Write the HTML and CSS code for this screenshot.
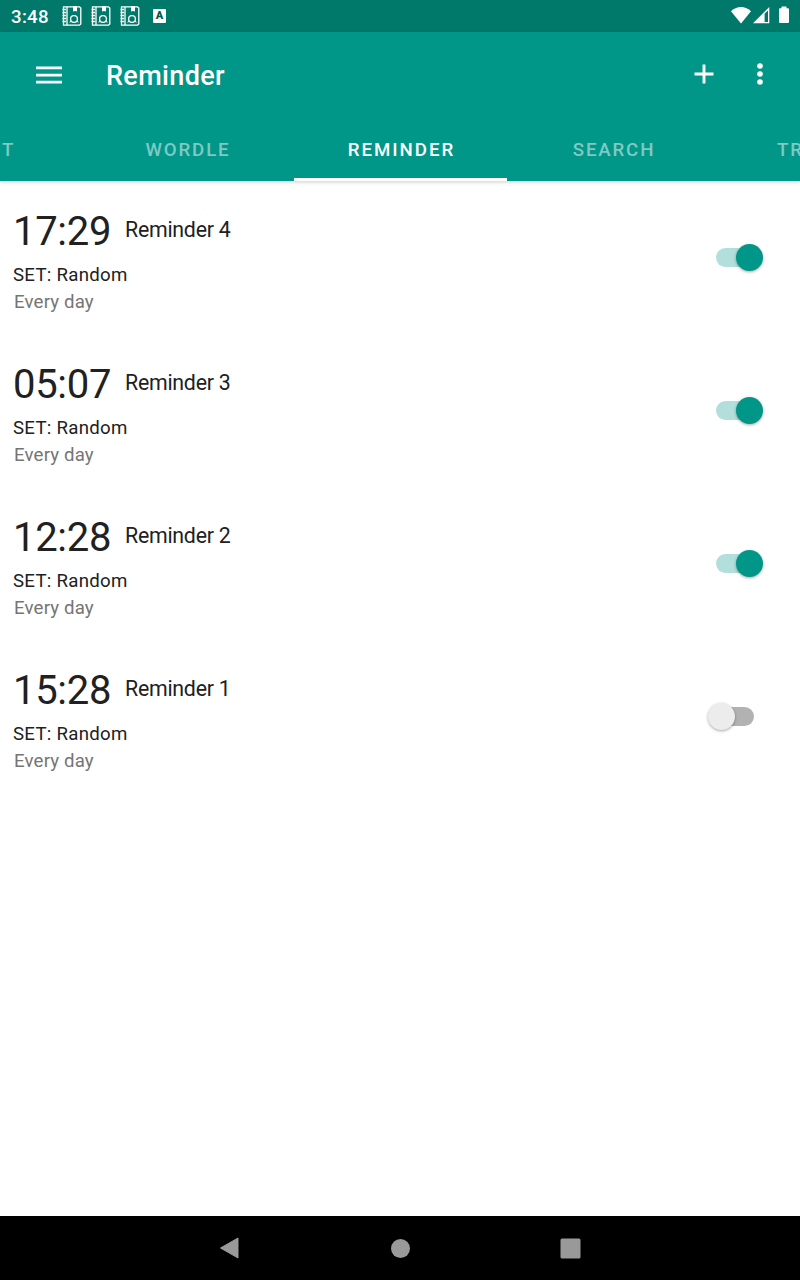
FILE: index.html
```html
<!DOCTYPE html>
<html lang="en">
<head>
  <meta charset="UTF-8" />
  <meta name="viewport" content="width=device-width, initial-scale=1.0"/>
  <title>Reminder</title>
  <link rel="stylesheet" href="styles.css">
</head>
<body>
  <!-- shared icons -->
  <svg class="defs" width="0" height="0">
    <symbol id="notebook" viewBox="0 0 20 20">
      <path d="M1.5 .8H17.5L18.8 2V18L17.5 19.2H1.5Z M5 1V19" fill="none" stroke="currentColor" stroke-width="1.3"/>
      <path d="M.5 3.5H4M.5 6.5H4M.5 9.5H4M.5 12.5H4M.5 15.5H4" stroke="currentColor" stroke-width="1.3"/>
      <path d="M11 0H15V5.6L13 5L11 5.6Z" fill="currentColor"/>
      <circle cx="12" cy="13" r="3.4" fill="none" stroke="currentColor" stroke-width="1.3"/>
      <path d="M7.5 16.2L9.5 15.2M14.5 15.2L16.5 16.2" stroke="currentColor"/>
    </symbol>
  </svg>

  <div class="status-bar">
    <span class="clock">3:48</span>
    <div class="notifications">
      <svg width="20" height="20"><use href="#notebook"/></svg>
      <svg width="20" height="20"><use href="#notebook"/></svg>
      <svg width="20" height="20"><use href="#notebook"/></svg>
      <span class="app-badge">A</span>
    </div>
    <svg class="system" width="60" height="20" viewBox="0 0 60 20">
      <path d="M1 5.2Q11 -3 21 5.2L11 17.5Z" fill="#fff"/>
      <path d="M39.3 1V17.3H23Z" fill="#fff"/>
      <path d="M34.6 7.5L38 4.6V15.9H34.6Z" fill="#00796b"/>
      <path d="M51.5 .5H56.5V2.3H58Q59 2.3 59 3.3V16Q59 17 58 17H50Q49 17 49 16V3.3Q49 2.3 50 2.3H51.5Z" fill="#fff"/>
    </svg>
  </div>

  <header class="app-bar">
    <div class="toolbar">
      <svg class="menu" width="26" height="18" viewBox="0 0 26 18">
        <path d="M0 1.9H26M0 9.2H26M0 16.2H26" stroke="#fff" stroke-width="2.7"/>
      </svg>
      <h1>Reminder</h1>
      <svg class="add" width="20" height="20" viewBox="0 0 20 20">
        <path d="M.5 10H19.5M10 .5V19.5" stroke="#fff" stroke-width="2.9"/>
      </svg>
      <svg class="more" width="6" height="22" viewBox="0 0 6 22" fill="#fff">
        <circle cx="3" cy="3" r="2.8"/>
        <circle cx="3" cy="11" r="2.8"/>
        <circle cx="3" cy="19" r="2.8"/>
      </svg>
    </div>
    <nav class="tabs">
      <span class="tab tab-first">T</span>
      <span class="tab">WORDLE</span>
      <span class="tab active">REMINDER</span>
      <span class="tab">SEARCH</span>
      <span class="tab tab-last">TR</span>
    </nav>
  </header>

  <main class="reminders">
    <div class="reminder">
      <div class="info">
        <div class="heading"><span class="time">17:29</span><span class="name">Reminder 4</span></div>
        <div class="set">SET: Random</div>
        <div class="repeat">Every day</div>
      </div>
      <div class="switch on"><span class="thumb"></span></div>
    </div>
    <div class="reminder">
      <div class="info">
        <div class="heading"><span class="time">05:07</span><span class="name">Reminder 3</span></div>
        <div class="set">SET: Random</div>
        <div class="repeat">Every day</div>
      </div>
      <div class="switch on"><span class="thumb"></span></div>
    </div>
    <div class="reminder">
      <div class="info">
        <div class="heading"><span class="time">12:28</span><span class="name">Reminder 2</span></div>
        <div class="set">SET: Random</div>
        <div class="repeat">Every day</div>
      </div>
      <div class="switch on"><span class="thumb"></span></div>
    </div>
    <div class="reminder">
      <div class="info">
        <div class="heading"><span class="time">15:28</span><span class="name">Reminder 1</span></div>
        <div class="set">SET: Random</div>
        <div class="repeat">Every day</div>
      </div>
      <div class="switch"><span class="thumb"></span></div>
    </div>
  </main>

  <footer class="nav-bar">
    <svg width="20" height="22" viewBox="0 0 20 22"><path d="M1.5 11L19 1V21Z" fill="#999" stroke="#999" stroke-linejoin="round"/></svg>
    <svg width="20" height="20" viewBox="0 0 20 20"><circle cx="10.5" cy="10.5" r="9.5" fill="#999"/></svg>
    <svg width="20" height="20" viewBox="0 0 20 20"><rect x="-.5" y=".5" width="20" height="20" rx="1.5" fill="#999"/></svg>
  </footer>
</body>
</html>
```
FILE: styles.css
```css
* {
  box-sizing: border-box;
}

body {
  font-family: Roboto, sans-serif;
  margin: 0;
  height: 100vh;
  display: flex;
  flex-direction: column;
  background-color: #fff;
  color: #212121;
  overflow: hidden;
}

svg {
  display: block;
  flex: none;
  overflow: visible;
}

.defs {
  display: none;
}

.status-bar {
  height: 32px;
  flex: none;
  display: flex;
  align-items: center;
  padding: 0 10px 0 11px;
  background-color: #00796b;
  color: #fff;
}

.clock {
  width: 51px;
  padding-top: 1px;
  font-size: 18.67px;
  font-weight: 500;
  letter-spacing: 0.3px;
}

.notifications {
  display: flex;
  align-items: center;
  gap: 9px;
}

.app-badge {
  width: 13px;
  height: 14px;
  margin-left: 4px;
  border-radius: 1px;
  background-color: #fff;
  color: #00594f;
  font-size: 11px;
  font-weight: 900;
  line-height: 13px;
  text-align: center;
}

.system {
  margin-left: auto;
}

.app-bar {
  height: 149px;
  flex: none;
  background-color: #009688;
  color: #fff;
  box-shadow: 0 1px 4px rgba(0, 0, 0, 0.2);
}

.toolbar {
  height: 85px;
  display: flex;
  align-items: center;
  padding: 0 37px 0 36px;
}

h1 {
  margin: 2px auto 0 44px;
  font-size: 27px;
  font-weight: 500;
  letter-spacing: 0.35px;
}

.add {
  margin: 0 43px 2px 0;
}

.more {
  margin-bottom: 2px;
}

.tabs {
  height: 64px;
  display: grid;
  grid-template-columns: 81px 213px 213px 213px 80px;
  overflow: hidden;
}

.tab {
  padding: 22px 0 0 1px;
  font-size: 18.67px;
  font-weight: 500;
  line-height: 22px;
  letter-spacing: 1.85px;
  text-align: center;
  color: rgba(255, 255, 255, 0.5);
}

.tab.active {
  padding-left: 2px;
  letter-spacing: 2px;
  color: #fff;
  border-bottom: 3px solid #fff;
}

.tab-first {
  text-align: left;
  padding-left: 2px;
}

.tab-last {
  text-align: left;
  padding-left: 57px;
}

.reminders {
  flex: 1;
}

.reminder {
  height: 153px;
  display: flex;
  align-items: center;
  justify-content: space-between;
  padding: 0 37px 0 13px;
}

.info {
  padding-top: 9px;
}

.heading {
  display: flex;
  margin-bottom: 6px;
}

.time {
  width: 112px;
  font-size: 40px;
  line-height: 48px;
  letter-spacing: -0.3px;
}

.name {
  padding-top: 9px;
  font-size: 21.33px;
  line-height: 25px;
  letter-spacing: -0.25px;
}

.set,
.repeat {
  font-size: 18.67px;
  line-height: 27px;
  letter-spacing: 0.27px;
}

.repeat {
  padding-left: 1px;
  letter-spacing: 0.15px;
  color: #757575;
}

.switch {
  width: 38px;
  height: 19px;
  margin-right: 9px;
  display: flex;
  align-items: center;
  border-radius: 10px;
  background-color: #b2b2b2;
}

.thumb {
  width: 27px;
  height: 27px;
  flex: none;
  margin-left: -8px;
  border-radius: 50%;
  background-color: #ececec;
  box-shadow: 0 1px 3px rgba(0, 0, 0, 0.35);
}

.switch.on {
  background-color: #b2dfdb;
}

.switch.on .thumb {
  margin-left: 20px;
  background-color: #009688;
}

.nav-bar {
  height: 64px;
  flex: none;
  display: flex;
  align-items: center;
  justify-content: space-between;
  padding: 0 219px;
  background-color: #000;
}
```
